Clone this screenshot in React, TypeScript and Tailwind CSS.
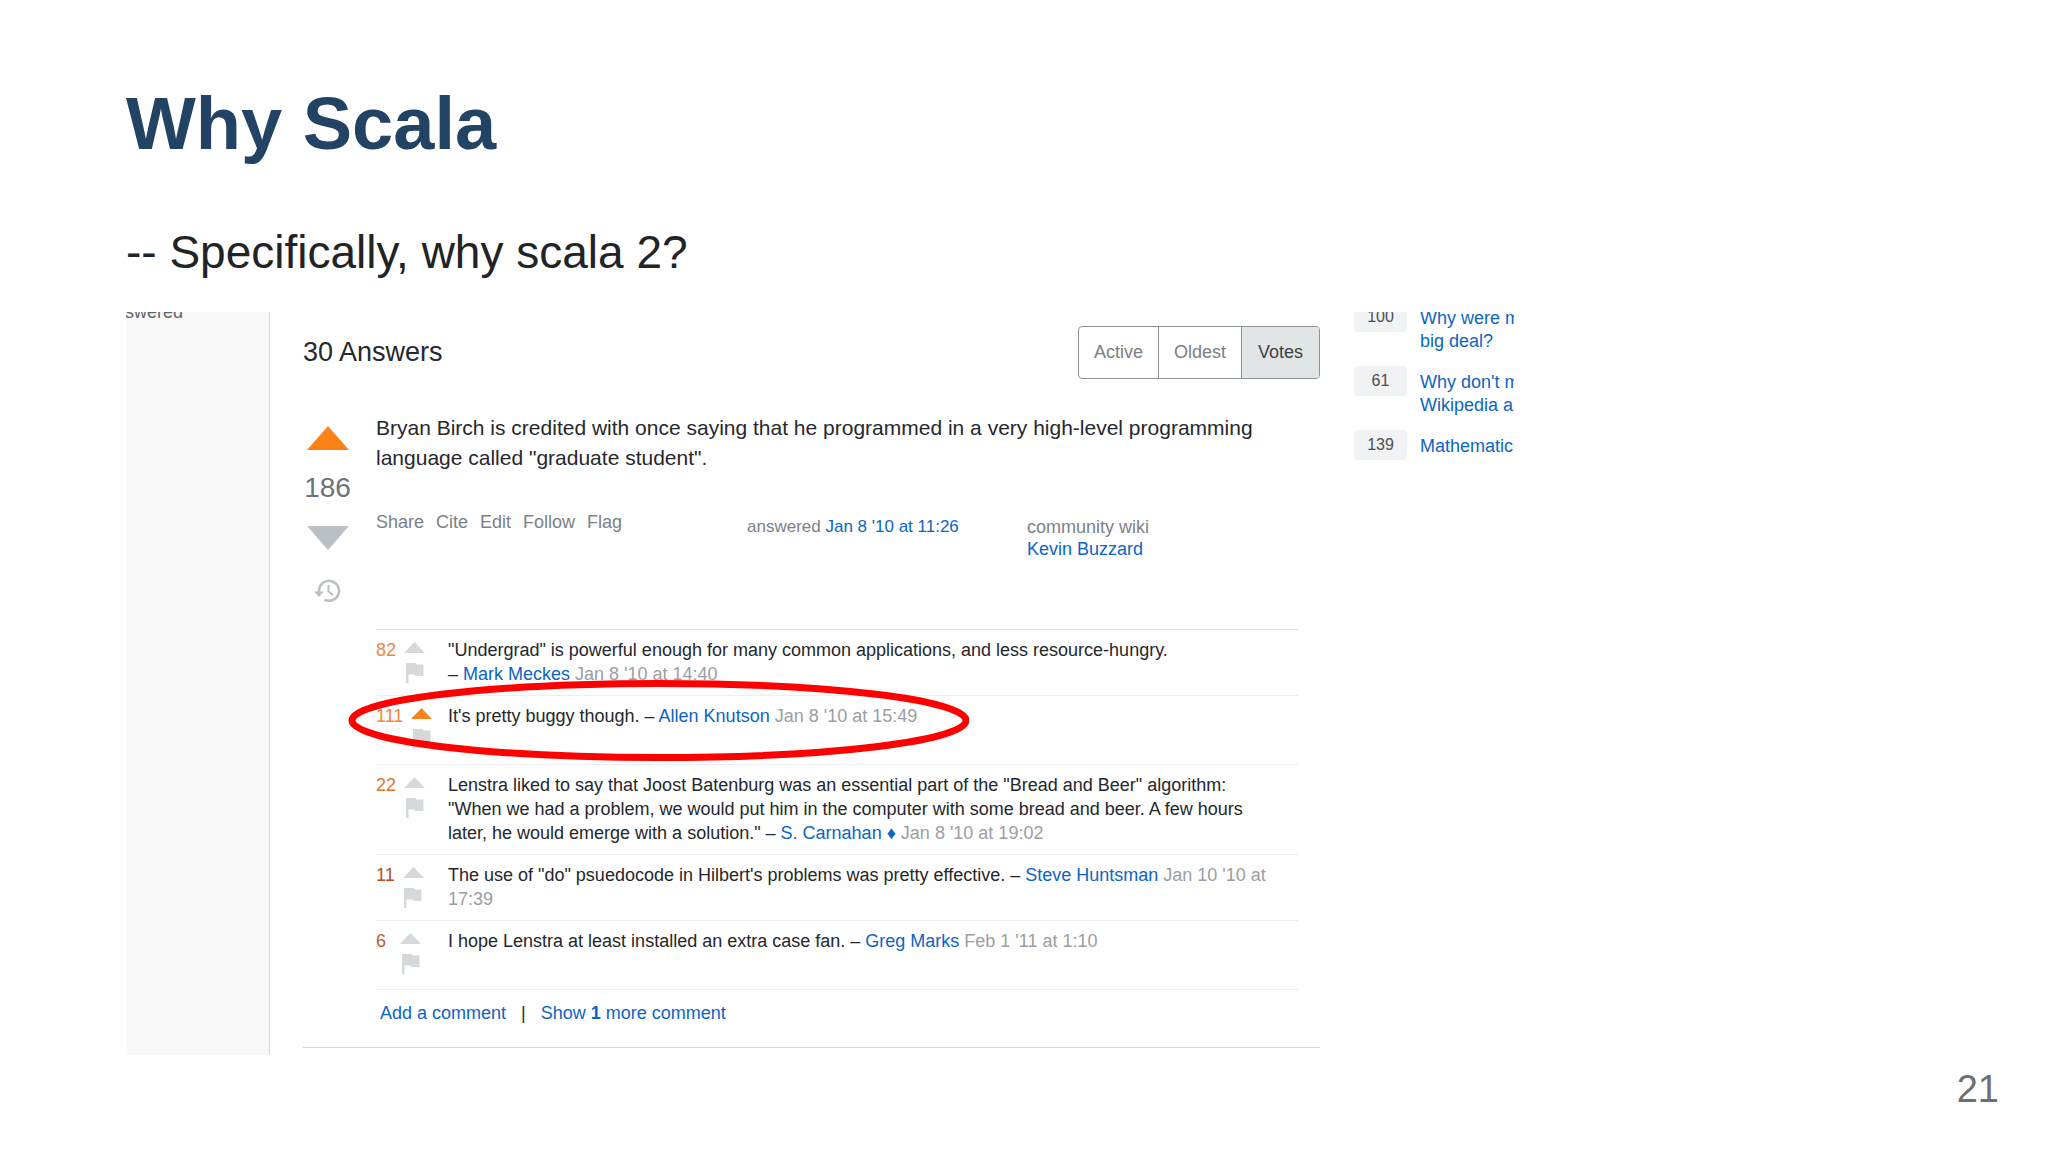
import type { ReactNode } from "react";

function Link({ children }: { children: ReactNode }) {
  return (
    <a href="#" className="text-[#0c65c4]">
      {children}
    </a>
  );
}

function Triangle({ className, down = false }: { className: string; down?: boolean }) {
  return (
    <svg viewBox="0 0 42 22" preserveAspectRatio="none" className={className} fill="currentColor" aria-hidden="true">
      <path d={down ? "M0 0H42L21 22Z" : "M21 0L42 22H0Z"} />
    </svg>
  );
}

function Flag() {
  return (
    <svg viewBox="0 0 18 20" className="h-5 w-[18px]" fill="currentColor" aria-hidden="true">
      <path d="M0 0H9.500L10.500 1.500H17.500V13H9.500L8.500 11.500H2.500V20H0Z" />
    </svg>
  );
}

function History() {
  return (
    <svg viewBox="0 0 27 24" className="h-6 w-[27px]" fill="none" stroke="currentColor" strokeWidth="2.500" aria-hidden="true">
      <path d="M5 13V11.500A10 10 0 1 1 10.500 20.700" />
      <path d="M0 12.500H10L5 18Z" fill="currentColor" stroke="none" />
      <path d="M14.500 6V12.500L19 16" strokeWidth="2" />
    </svg>
  );
}

type Comment = {
  score: number;
  scoreClass: string;
  voted?: boolean;
  circled?: boolean;
  short?: boolean;
  body: ReactNode;
};

function Stamp({ children }: { children: ReactNode }) {
  return <span className="text-[#9a9fa4]">{children}</span>;
}

const comments: Comment[] = [
  {
    score: 82,
    scoreClass: "text-[#ee8640]",
    body: (
      <>
        "Undergrad" is powerful enough for many common applications, and less resource-hungry.
        <br />– <Link>Mark Meckes</Link> <Stamp>Jan 8 '10 at 14:40</Stamp>
      </>
    ),
  },
  {
    score: 111,
    scoreClass: "text-[#f48642]",
    voted: true,
    circled: true,
    short: true,
    body: (
      <>
        It's pretty buggy though. – <Link>Allen Knutson</Link> <Stamp>Jan 8 '10 at 15:49</Stamp>
      </>
    ),
  },
  {
    score: 22,
    scoreClass: "text-[#e0722e]",
    body: (
      <>
        Lenstra liked to say that Joost Batenburg was an essential part of the "Bread and Beer" algorithm:
        <br />
        "When we had a problem, we would put him in the computer with some bread and beer. A few hours
        <br />
        later, he would emerge with a solution." – <Link>S. Carnahan ♦</Link> <Stamp>Jan 8 '10 at 19:02</Stamp>
      </>
    ),
  },
  {
    score: 11,
    scoreClass: "text-[#b4501f]",
    body: (
      <>
        The use of "do" psuedocode in Hilbert's problems was pretty effective. – <Link>Steve Huntsman</Link>{" "}
        <Stamp>
          Jan 10 '10 at
          <br />
          17:39
        </Stamp>
      </>
    ),
  },
  {
    score: 6,
    scoreClass: "text-[#c05a30]",
    short: true,
    body: (
      <>
        I hope Lenstra at least installed an extra case fan. – <Link>Greg Marks</Link> <Stamp>Feb 1 '11 at 1:10</Stamp>
      </>
    ),
  },
];

function CommentRow({ comment }: { comment: Comment }) {
  return (
    <li
      className={
        "relative flex border-b border-[#eceef0] pt-2 pb-[9px] text-[18px] leading-6 " +
        (comment.short ? "min-h-[69px]" : "")
      }
    >
      <div className="flex w-[72px] shrink-0 gap-2">
        <span className={"min-w-4 " + comment.scoreClass}>{comment.score}</span>
        <div className="flex flex-col items-center gap-[10px] pt-1 text-[#d6d9dc]">
          <button aria-label="Upvote comment" className={comment.voted ? "text-[#f9821b]" : ""}>
            <Triangle className="block h-[11px] w-[21px]" />
          </button>
          <button aria-label="Flag comment">
            <Flag />
          </button>
        </div>
      </div>
      <p className="min-w-0 whitespace-nowrap text-[#24282c]">{comment.body}</p>
      {comment.circled && (
        <svg
          viewBox="0 0 621 81"
          className="pointer-events-none absolute -top-4 -left-7 z-10 h-[81px] w-[621px]"
          fill="none"
          stroke="#ff0000"
          strokeWidth="7"
          aria-hidden="true"
        >
          <ellipse cx="311" cy="40.500" rx="307" ry="37" />
        </svg>
      )}
    </li>
  );
}

const related = [
  { votes: 100, lines: ["Why were mathematicians", "big deal?"] },
  { votes: 61, lines: ["Why don't mathematicians", "Wikipedia articles"] },
  { votes: 139, lines: ["Mathematicians"] },
];

const sorts = ["Active", "Oldest", "Votes"];

export default function App() {
  return (
    <div className="flex min-h-screen flex-col bg-[#fefefe] px-[126px] pt-[84px] font-['Liberation_Sans',Arial,sans-serif]">
      <h1 className="text-[74px] leading-[80px] font-bold text-[#224364]">Why Scala</h1>
      <p className="mt-[62px] text-[46px] leading-[52px] text-[#222325]">-- Specifically, why scala 2?</p>

      <section className="mt-[34px] flex max-w-[1388px] overflow-hidden">
        <aside className="w-36 shrink-0 border-r border-[#d3d6da] bg-[#f8f8f9]">
          <div className="flex h-[10px] items-end overflow-hidden text-[18px] leading-5 text-[#606468]">
            <span className="-ml-px">swered</span>
          </div>
        </aside>

        <main className="ml-[33px] min-w-0 flex-1 pt-[14px]">
          <header className="flex items-center justify-between">
            <h2 className="pb-[2px] text-[27px] leading-8 text-[#26292d]">30 Answers</h2>
            <div className="flex h-[53px] overflow-hidden rounded border border-[#8c9195] text-[18px]">
              {sorts.map((name) => (
                <button
                  key={name}
                  className={
                    name === "Votes"
                      ? "bg-[#e1e5e6] px-4 text-[#3c4146]"
                      : "border-r border-[#8c9195] px-[15px] text-[#7a8086]"
                  }
                >
                  {name}
                </button>
              ))}
            </div>
          </header>

          <article className="flex pt-[34px] pr-[22px]">
            <div className="mr-6 flex w-[49px] shrink-0 flex-col items-center pt-[13px]">
              <button aria-label="Upvote" className="text-[#fb8218]">
                <Triangle className="block h-6 w-[42px]" />
              </button>
              <span className="mt-5 text-[28px] leading-9 text-[#6c737a]">186</span>
              <button aria-label="Downvote" className="mt-5 text-[#bbc0c4]">
                <Triangle down className="block h-6 w-[42px]" />
              </button>
              <button aria-label="History" className="mt-[29px] text-[#bbc0c4]">
                <History />
              </button>
            </div>

            <div className="min-w-0 flex-1">
              <p className="text-[21px] leading-[30px] whitespace-nowrap text-[#26292d]">
                Bryan Birch is credited with once saying that he programmed in a very high-level programming
                <br />
                language called "graduate student".
              </p>
              <div className="mt-[38px] flex h-[118px] text-[18px] leading-[22px] text-[#7b8188]">
                <nav className="flex w-[371px] gap-3">
                  {["Share", "Cite", "Edit", "Follow", "Flag"].map((name) => (
                    <a key={name} href="#">
                      {name}
                    </a>
                  ))}
                </nav>
                <p className="w-[280px] pt-[5px] text-[17px]">
                  answered <Link>Jan 8 '10 at 11:26</Link>
                </p>
                <p className="pt-[5px]">
                  community wiki
                  <br />
                  <Link>Kevin Buzzard</Link>
                </p>
              </div>

              <ul className="border-t border-[#dfe2e5]">
                {comments.map((comment) => (
                  <CommentRow key={comment.score} comment={comment} />
                ))}
              </ul>
              <div className="flex gap-[15px] pt-[11px] pl-1 text-[18px] leading-6 text-[#24282c]">
                <Link>Add a comment</Link>
                <span>|</span>
                <Link>
                  Show <b>1</b> more comment
                </Link>
              </div>
            </div>
          </article>
          <hr className="mt-[22px] border-t border-[#d3d6da]" />
          <div className="h-[7px]" />
        </main>

        <aside className="-mt-[10px] ml-[34px] flex w-40 shrink-0 flex-col gap-[13px] overflow-hidden">
          {related.map((item) => (
            <div key={item.votes} className="flex gap-[13px]">
              <span className="h-[30px] w-[53px] shrink-0 rounded bg-[#f1f2f3] text-center text-[16px] leading-[29px] text-[#4a4e53]">
                {item.votes}
              </span>
              <a href="#" className="pt-[5px] text-[18px] leading-[23px] whitespace-nowrap text-[#0c65c4]">
                {item.lines.map((line) => (
                  <span key={line} className="block">
                    {line}
                  </span>
                ))}
              </a>
            </div>
          ))}
        </aside>
      </section>

      <footer className="mt-auto -mr-[77px] pb-[41px] text-right text-[38px] leading-[44px] text-[#6f6f6f]">21</footer>
    </div>
  );
}
